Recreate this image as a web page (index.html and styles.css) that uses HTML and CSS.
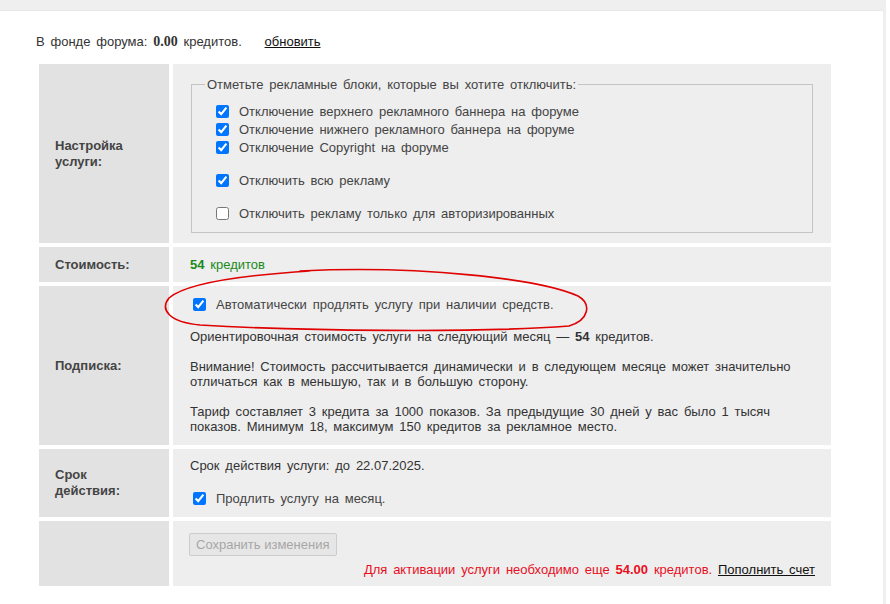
FILE: index.html
```html
<!DOCTYPE html>
<html lang="ru">
<head>
<meta charset="utf-8">
<title>Отключение рекламы</title>
<link rel="stylesheet" href="styles.css">
</head>
<body>
<div class="page">
  <div class="topbar"></div>
  <div class="fund">В фонде форума: <b class="num">0.00</b> кредитов. <a href="#" class="refresh">обновить</a></div>
  <table class="svc">
    <tr>
      <td class="lbl">Настройка<br>услуги:</td>
      <td class="cnt cnt-fs">
        <fieldset class="blocks">
          <legend>Отметьте рекламные блоки, которые вы хотите отключить:</legend>
          <label class="opt"><input type="checkbox" checked> Отключение верхнего рекламного баннера на форуме</label>
          <label class="opt"><input type="checkbox" checked> Отключение нижнего рекламного баннера на форуме</label>
          <label class="opt"><input type="checkbox" checked> Отключение Copyright на форуме</label>
          <label class="opt opt-all"><input type="checkbox" checked> Отключить всю рекламу</label>
          <label class="opt opt-auth"><input type="checkbox"> Отключить рекламу только для авторизированных</label>
        </fieldset>
      </td>
    </tr>
    <tr>
      <td class="lbl">Стоимость:</td>
      <td class="cnt cnt-cost"><span class="cost"><b>54</b> кредитов</span></td>
    </tr>
    <tr>
      <td class="lbl">Подписка:</td>
      <td class="cnt cnt-sub">
        <label class="opt opt-sub"><input type="checkbox" checked> Автоматически продлять услугу при наличии средств.</label>
        <p class="txt">Ориентировочная стоимость услуги на следующий месяц — <b>54</b> кредитов.</p>
        <p class="txt">Внимание! Стоимость рассчитывается динамически и в следующем месяце может значительно отличаться как в меньшую, так и в большую сторону.</p>
        <p class="txt">Тариф составляет 3 кредита за 1000 показов. За предыдущие 30 дней у вас было 1 тысяч показов. Минимум 18, максимум 150 кредитов за рекламное место.</p>
      </td>
    </tr>
    <tr>
      <td class="lbl">Срок<br>действия:</td>
      <td class="cnt cnt-term">
        <p class="txt">Срок действия услуги: до 22.07.2025.</p>
        <label class="opt opt-sub opt-term"><input type="checkbox" checked> Продлить услугу на месяц.</label>
      </td>
    </tr>
    <tr>
      <td class="lbl"></td>
      <td class="cnt cnt-save">
        <button class="save" disabled>Сохранить изменения</button>
        <div class="need">Для активации услуги необходимо еще <b>54.00</b> кредитов. <a href="#" class="topup">Пополнить счет</a></div>
      </td>
    </tr>
  </table>
  <svg class="mark" width="890" height="604" viewBox="0 0 890 604" aria-hidden="true">
    <path d="M 300 271 C 420 265, 540 279, 578 296 C 592 304, 589 320, 569 326 C 480 333, 300 331, 200 325 C 168 322, 160 309, 169 298 C 184 285, 230 276, 310 271" fill="none" stroke="#e00000" stroke-width="1.6" stroke-linecap="round"/>
  </svg>
</div>
</body>
</html>
```
FILE: styles.css
```css
html, body {
  margin: 0;
  padding: 0;
  background: #ffffff;
}
body {
  font-family: "Liberation Sans", Arial, sans-serif;
  font-size: 13px;
  color: #333333;
  word-spacing: 2.2px;
}
.page {
  position: relative;
  width: 883px;
  height: 604px;
  border-right: 3px solid #efefef;
  box-sizing: content-box;
  overflow: hidden;
}
.topbar {
  height: 10px;
  background: #efefef;
  border-bottom: 1px solid #e8e8e8;
}
.fund {
  padding: 23px 0 0 36px;
  line-height: 16px;
  height: 16px;
}
.num {
  font-family: "Liberation Serif", "Times New Roman", serif;
  font-weight: bold;
  font-size: 14px;
}
.refresh {
  color: #111111;
  margin-left: 17px;
}
.svc {
  border-collapse: separate;
  border-spacing: 4px;
  margin: 10px 0 0 35px;
  width: 800px;
}
.lbl {
  width: 114px;
  background: #e2e2e2;
  font-weight: bold;
  color: #444444;
  padding: 0 0 0 16px;
  vertical-align: middle;
  line-height: 16px;
  word-spacing: 0;
}
.cnt {
  background: #eeeeee;
  vertical-align: top;
  padding: 0 17px;
  line-height: 15px;
}
.cnt-fs {
  padding: 13px 18px 10px 18px;
}
.blocks {
  margin: 0;
  padding: 10px 10px 10px 13px;
  border: 1px solid #c4c4c4;
  display: flex;
  flex-direction: column;
}
.blocks legend {
  padding: 0 2px;
  color: #444444;
  line-height: 15px;
}
.opt {
  display: flex;
  align-items: center;
  gap: 10px;
  height: 18px;
  padding-left: 11px;
  color: #444444;
}
.opt input {
  margin: 0;
  width: 13px;
  height: 13px;
  flex: none;
}
.opt-all {
  margin-top: 15px;
}
.opt-auth {
  margin-top: 15px;
}
.cnt-cost {
  padding-top: 10px;
  padding-bottom: 9px;
  line-height: 16px;
}
.cost {
  color: #1a8a1a;
}
.cnt-sub {
  padding-top: 10px;
  padding-bottom: 11px;
}
.opt-sub {
  padding-left: 3px;
  height: 16px;
}
.txt {
  margin: 15px 0 0 0;
}
.opt-sub + .txt {
  margin-top: 17px;
}
.cnt-term {
  padding-top: 9px;
  padding-bottom: 11px;
}
.cnt-term .txt {
  margin: 0;
}
.opt-term {
  margin-top: 17px;
}
.cnt-save {
  padding: 12px 16px 9px 16px;
}
.save {
  font-family: "Liberation Sans", Arial, sans-serif;
  font-size: 13px;
  color: #a6a6a6;
  background: #e6e6e6;
  border: 1px solid #cdcdcd;
  border-radius: 2px;
  height: 23px;
  padding: 0 6px;
  word-spacing: 0;
}
.need {
  text-align: right;
  color: #e8101e;
  margin-top: 6px;
  line-height: 15px;
}
.topup {
  color: #111111;
}
.mark {
  position: absolute;
  left: 0;
  top: 0;
  pointer-events: none;
}
```
